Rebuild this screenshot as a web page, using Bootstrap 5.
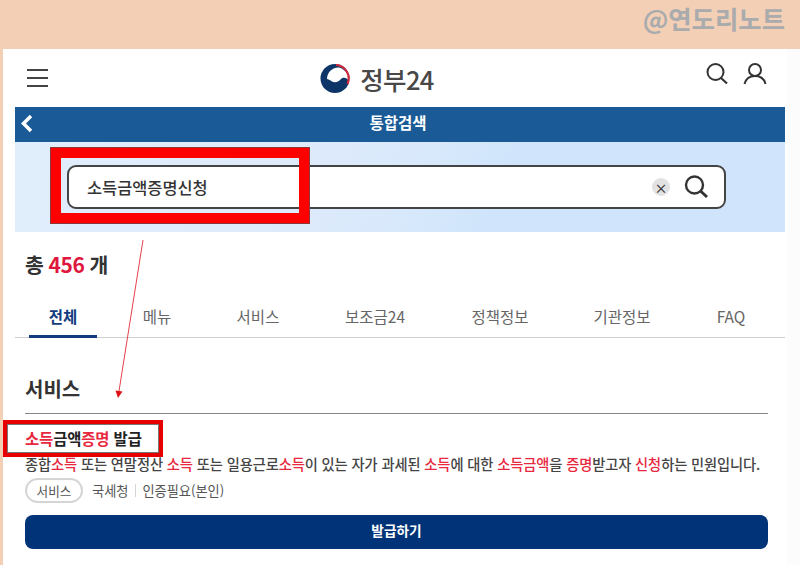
<!DOCTYPE html>
<html lang="ko">
<head>
<meta charset="utf-8">
<title>정부24 통합검색</title>
<link href="https://cdn.jsdelivr.net/npm/bootstrap@5.3.0/dist/css/bootstrap.min.css" rel="stylesheet">
<style>
html,body{height:565px;overflow:hidden}
body{background:#f3cfb6;font-family:"Noto Sans CJK KR","Liberation Sans",sans-serif;color:#333;position:relative}
.top-band{height:49px;padding:0 15px 0 0}
.wm{font-size:25.4px;font-weight:700;color:#a9abad;line-height:36px;height:36px}
.sheet{margin-left:3px;height:516px;background:linear-gradient(90deg,#fff 784px,#fcfcfc 784px);padding:0 15px 0 12px}
.head-row{height:58px}
.hb-ic{margin-left:11px}
.logo-txt{font-size:25.5px;font-weight:500;color:#484848;letter-spacing:-.6px;line-height:1}
.logo-wrap{margin-right:2px;padding-top:1px}
.head-ics{gap:14px;margin-right:18px;padding-bottom:8px}
.blue-bar{height:35px;background:#1a5a96;color:#fff;font-size:15.5px;font-weight:700;position:relative;padding-bottom:3px;padding-right:4px}
.back-ic{position:absolute;left:5px;top:7px}
.search-band{height:90px;background:#d0e5fb;background-image:linear-gradient(115deg,#e0edfb 0,#dfebfb 33%,#d9e9fb 50%,#d0e5fb 62%);padding:23px 59px 0 52px}
.s-box{height:44px;border:2px solid #444;border-radius:9px;background:#fff;padding:0 15px 0 18px;font-size:16.4px;font-weight:500;color:#333}
.s-clear{width:18px;height:18px;border-radius:50%;background:#e2e2e2;font-size:13px;line-height:1;margin-right:1px}
.total{font-size:20.5px;font-weight:700;padding:17px 0 0 10px;line-height:30px;color:#333;letter-spacing:-.5px}
.total em{font-style:normal;color:#e0173d;font-size:21px}
.tabs-row{margin-top:17px;height:42px;border-bottom:1px solid #cfcfcf;padding-left:14px}
.tab-i{font-size:15.5px;color:#666;text-align:center;height:42px;line-height:40px;flex:none}
.tab-i.on{color:#123b7d;font-weight:700;border-bottom:3px solid #123b7d}
.t1{width:68px}.t2{width:120px}.t3{width:82px}.t4{width:152px}.t5{width:98px}.t6{width:146px}.t7{width:72px}
.sec-h{font-size:20px;font-weight:700;margin:36px 17px 0 10px;padding-bottom:9px;border-bottom:1px solid #888;line-height:30px;color:#333}
.svc-title{font-size:15.4px;font-weight:700;margin:14px 0 0 10px;line-height:20px;color:#222;letter-spacing:-.1px}
.hit{color:#e8283e}
.svc-desc{font-size:14.26px;font-weight:500;margin:6px 0 0 10px;line-height:20px;color:#444;white-space:nowrap;letter-spacing:-.1px}
.meta{margin:4px 0 0 10px;height:25px;font-size:13.2px;color:#555}
.pill-tag{height:25px;width:58px;border:2px solid #d5d5d5;border-radius:13px;text-align:center;line-height:21px;color:#555;font-size:12.6px;margin-right:9px}
.sep{border-left:1px solid #d5d5d5;height:13px;margin:0 6px 0 7px}
.go-btn{display:block;height:34px;margin:12px 17px 0 10px;background:#003378;border:0;border-radius:8px;color:#fff;font-size:13.7px;font-weight:700;width:calc(100% - 27px);padding:0 0 3px}
.mark-a{position:absolute;left:50px;top:147px;width:260px;height:77px;border:11px solid #f00;outline:1px solid #8a3a3a;outline-offset:-1px}
.mark-b{position:absolute;left:3px;top:420px;width:160px;height:37px;border:4px solid #e60000;box-shadow:inset 0 0 0 1px #777}
.arrow-s{position:absolute;left:0;top:0;pointer-events:none}
</style>
</head>
<body>
<div class="top-band d-flex justify-content-end"><div class="wm">@연도리노트</div></div>
<div class="sheet">
  <div class="head-row d-flex align-items-center justify-content-between">
    <svg class="hb-ic" width="24" height="20" viewBox="0 0 24 20"><path d="M1 2h21M1 10h21M1 18h21" stroke="#444" stroke-width="2"/></svg>
    <div class="logo-wrap d-flex align-items-center gap-2">
      <svg width="33" height="29" viewBox="0 0 33 29">
        <circle cx="16" cy="14.500" r="14.500" fill="#0d3567"/>
        <path d="M8 15C8 9 13 3 20 3.500 26 5 31 11 31 18 28 13 24 13 22 15 20 18 16 19 13 17.500 11 16 9 15 8 15Z" fill="#fff"/>
        <path d="M17 1A13.500 13.500 0 0 1 28.500 20" fill="none" stroke="#cf2a3f" stroke-width="2.200"/>
      </svg>
      <span class="logo-txt">정부24</span>
    </div>
    <div class="head-ics d-flex align-items-center">
      <svg width="24" height="24" viewBox="0 0 24 24"><circle cx="10.500" cy="10" r="8" fill="none" stroke="#333" stroke-width="2"/><path d="M16 16l6 5.500" stroke="#333" stroke-width="2.200"/></svg>
      <svg width="24" height="24" viewBox="0 0 24 24"><circle cx="12" cy="8" r="6" fill="none" stroke="#333" stroke-width="2"/><path d="M1.500 22C3 16 7 14 12 14s9 2 10.500 8" fill="none" stroke="#333" stroke-width="2"/></svg>
    </div>
  </div>
  <div class="blue-bar d-flex align-items-center justify-content-center">
    <svg class="back-ic" width="14" height="19" viewBox="0 0 14 19"><path d="M11 2L3.500 9.500 11 17" fill="none" stroke="#fff" stroke-width="3.500"/></svg>
    <span>통합검색</span>
  </div>
  <div class="search-band">
    <div class="s-box d-flex align-items-center justify-content-between">
      <span>소득금액증명신청</span>
      <div class="d-flex align-items-center gap-2">
        <span class="s-clear d-flex align-items-center justify-content-center">×</span>
        <svg class="ms-1" width="26" height="26" viewBox="0 0 26 26"><circle cx="11.500" cy="11" r="8.500" fill="none" stroke="#333" stroke-width="2.400"/><path d="M17.500 17l6.500 6" stroke="#333" stroke-width="3"/></svg>
      </div>
    </div>
  </div>
  <div class="total">총 <em>456</em> 개</div>
  <div class="tabs-row d-flex">
    <div class="tab-i on t1">전체</div>
    <div class="tab-i t2">메뉴</div>
    <div class="tab-i t3">서비스</div>
    <div class="tab-i t4">보조금24</div>
    <div class="tab-i t5">정책정보</div>
    <div class="tab-i t6">기관정보</div>
    <div class="tab-i t7">FAQ</div>
  </div>
  <div class="sec-h">서비스</div>
  <div class="svc-title"><span class="hit">소득</span>금액<span class="hit">증명</span> 발급</div>
  <div class="svc-desc">종합<span class="hit">소득</span> 또는 연말정산 <span class="hit">소득</span> 또는 일용근로<span class="hit">소득</span>이 있는 자가 과세된 <span class="hit">소득</span>에 대한 <span class="hit">소득금액</span>을 <span class="hit">증명</span>받고자 <span class="hit">신청</span>하는 민원입니다.</div>
  <div class="meta d-flex align-items-center">
    <span class="pill-tag">서비스</span><span>국세청</span><span class="sep"></span><span>인증필요(본인)</span>
  </div>
  <button type="button" class="btn go-btn">발급하기</button>
</div>
<div class="mark-a"></div>
<div class="mark-b"></div>
<svg class="arrow-s" width="800" height="565"><path d="M143 240L119 391" stroke="#e8404a" stroke-width="1"/><path d="M115.500 390.500L122.500 391.500L118 398Z" fill="#e01010"/></svg>
</body>
</html>
